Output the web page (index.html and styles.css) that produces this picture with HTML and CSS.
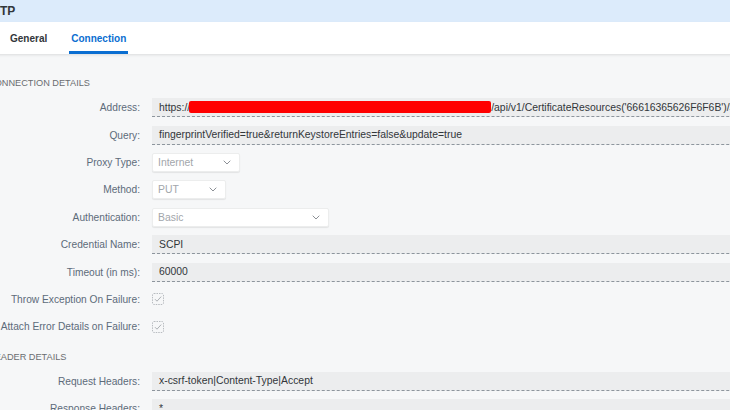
FILE: index.html
```html
<!DOCTYPE html>
<html>
<head>
<meta charset="utf-8">
<link rel="stylesheet" href="styles.css">
</head>
<body>
<div class="page">
  <div class="titlebar"><span class="title">HTTP</span></div>
  <div class="tabs">
    <div class="tab">General</div>
    <div class="tab active">Connection</div>
  </div>
  <div class="content">
    <div class="section-title">CONNECTION DETAILS</div>
    <div class="form">
      <div class="row">
        <label class="lbl">Address:</label>
        <div class="field input"><span>https://</span><span class="redact"></span><span>/api/v1/CertificateResources('66616365626F6F6B')/$value</span></div>
      </div>
      <div class="row">
        <label class="lbl">Query:</label>
        <div class="field input">fingerprintVerified=true&amp;returnKeystoreEntries=false&amp;update=true</div>
      </div>
      <div class="row">
        <label class="lbl">Proxy Type:</label>
        <div class="select w-proxy"><span>Internet</span><svg class="chev" viewBox="0 0 8 5" width="8" height="5"><path d="M0.7 0.7 L4 4 L7.3 0.7" fill="none" stroke="#8c9096" stroke-width="1"/></svg></div>
      </div>
      <div class="row">
        <label class="lbl">Method:</label>
        <div class="select w-method"><span>PUT</span><svg class="chev" viewBox="0 0 8 5" width="8" height="5"><path d="M0.7 0.7 L4 4 L7.3 0.7" fill="none" stroke="#8c9096" stroke-width="1"/></svg></div>
      </div>
      <div class="row">
        <label class="lbl">Authentication:</label>
        <div class="select w-auth"><span>Basic</span><svg class="chev" viewBox="0 0 8 5" width="8" height="5"><path d="M0.7 0.7 L4 4 L7.3 0.7" fill="none" stroke="#8c9096" stroke-width="1"/></svg></div>
      </div>
      <div class="row">
        <label class="lbl">Credential Name:</label>
        <div class="field input">SCPI</div>
      </div>
      <div class="row">
        <label class="lbl">Timeout (in ms):</label>
        <div class="field input">60000</div>
      </div>
      <div class="row">
        <label class="lbl">Throw Exception On Failure:</label>
        <div class="check"><svg viewBox="0 0 12 12" width="12" height="12"><rect x="0.5" y="0.5" width="11" height="11" rx="1.5" fill="none" stroke="#b8bcc0" stroke-dasharray="1.5 1"/><path d="M3 6.2 L5 8.2 L9.2 3.6" fill="none" stroke="#a4a8ad" stroke-width="0.9"/></svg></div>
      </div>
      <div class="row">
        <label class="lbl">Attach Error Details on Failure:</label>
        <div class="check"><svg viewBox="0 0 12 12" width="12" height="12"><rect x="0.5" y="0.5" width="11" height="11" rx="1.5" fill="none" stroke="#b8bcc0" stroke-dasharray="1.5 1"/><path d="M3 6.2 L5 8.2 L9.2 3.6" fill="none" stroke="#a4a8ad" stroke-width="0.9"/></svg></div>
      </div>
    </div>
    <div class="section-title second">HEADER DETAILS</div>
    <div class="form">
      <div class="row">
        <label class="lbl">Request Headers:</label>
        <div class="field input">x-csrf-token|Content-Type|Accept</div>
      </div>
      <div class="row">
        <label class="lbl">Response Headers:</label>
        <div class="field input">*</div>
      </div>
    </div>
  </div>
</div>
</body>
</html>
```

FILE: styles.css
```css
html, body {
  margin: 0;
  padding: 0;
  overflow: hidden;
  width: 730px;
  height: 410px;
  background: #f6f7f8;
  font-family: "Liberation Sans", Arial, sans-serif;
  color: #32363a;
}
.page {
  margin-left: -16px;
  width: 900px;
}
.titlebar {
  height: 22px;
  background: #dcebfb;
  display: flex;
  align-items: center;
}
.title {
  font-size: 12px;
  font-weight: bold;
  color: #32363a;
}
.tabs {
  height: 32px;
  background: #ffffff;
  display: flex;
  padding-left: 24px;
  border-bottom: 1px solid #e4e5e6;
  box-shadow: 0 1px 2px rgba(0,0,0,0.06);
}
.tab {
  font-size: 10px;
  font-weight: bold;
  color: #32363a;
  padding: 3px 2px 0;
  margin-right: 20px;
  display: flex;
  align-items: center;
  border-bottom: 3px solid transparent;
  box-sizing: border-box;
}
.tab.active {
  color: #0a6ed1;
  border-bottom-color: #0a6ed1;
}
.content {
  padding-top: 22px;
}
.section-title {
  font-size: 9.2px;
  color: #6a6d70;
  height: 12px;
  line-height: 12px;
  margin-left: 4px;
}
.section-title.second {
  margin-top: 10px;
}
.form {
  display: flex;
  flex-direction: column;
  padding-top: 5px;
}
.row {
  display: grid;
  grid-template-columns: 156px 1fr;
  column-gap: 12px;
  align-items: center;
  height: 27.4px;
}
.lbl {
  text-align: right;
  font-size: 10.2px;
  color: #5d6b7a;
  white-space: nowrap;
}
.field {
  height: 19px;
  box-sizing: border-box;
  font-size: 10.4px;
  display: flex;
  align-items: center;
  padding-left: 7px;
  white-space: nowrap;
  overflow: hidden;
}
.input {
  background: #ecedee;
  border-bottom: 1px dashed #8d959d;
}
.redact {
  display: inline-block;
  width: 302px;
  height: 12px;
  background: #ff0000;
  border-radius: 2px;
  margin-left: -1px;
}
.select {
  height: 19px;
  box-sizing: border-box;
  background: #ffffff;
  border: 1px solid #eceded;
  border-radius: 2px;
  box-shadow: 0 1px 1px rgba(0,0,0,0.08);
  display: flex;
  align-items: center;
  justify-content: space-between;
  padding: 0 8px 0 5px;
  font-size: 10.4px;
  color: #a2a6ab;
}
.w-proxy { width: 88px; }
.w-method { width: 74px; }
.w-auth { width: 177px; }
.chev { display: block; }
.check {
  display: flex;
  align-items: center;
}
.check svg { display: block; }
```
